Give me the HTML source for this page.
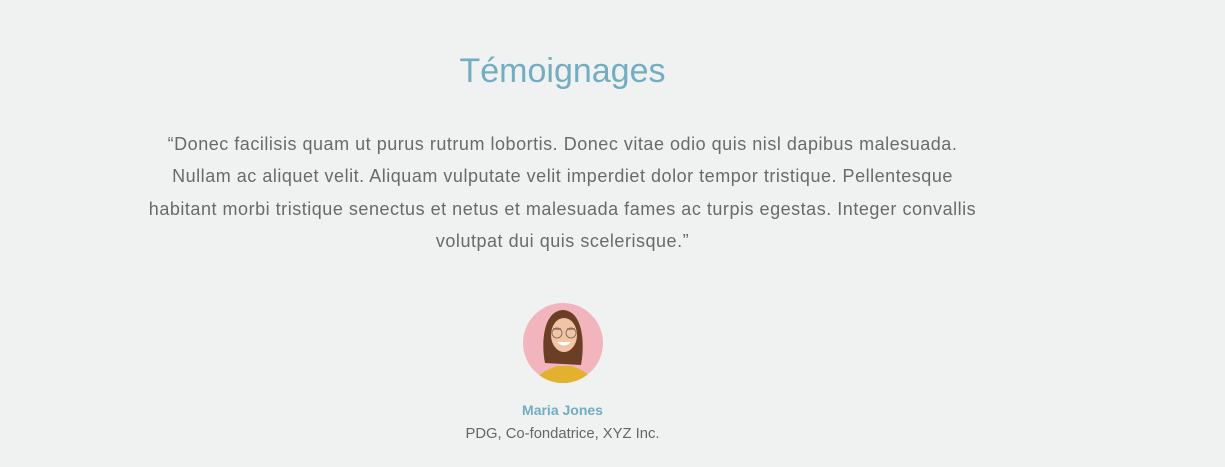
<!DOCTYPE html>
<html><head><meta charset="utf-8"><style>
html,body{margin:0;padding:0;width:1225px;height:467px;background:#f0f1f1;overflow:hidden;font-family:"Liberation Sans",sans-serif}
.c{position:absolute;left:0;width:1125px;text-align:center;white-space:nowrap}
h1{position:absolute;left:0;width:1125px;text-align:center;margin:0;top:50px;font-weight:400;font-size:34px;color:#72adc2;line-height:42px}
.q{top:128px;font-size:18px;letter-spacing:0.52px;line-height:32.3px;color:#6a6a6a}
.n{top:402px;font-size:14px;font-weight:700;color:#72adc2}
.t{top:426px;font-size:14.8px;color:#666}
</style></head><body>
<h1>Témoignages</h1>
<div class="c q">“Donec facilisis quam ut purus rutrum lobortis. Donec vitae odio quis nisl dapibus malesuada.<br>Nullam ac aliquet velit. Aliquam vulputate velit imperdiet dolor tempor tristique. Pellentesque<br>habitant morbi tristique senectus et netus et malesuada fames ac turpis egestas. Integer convallis<br>volutpat dui quis scelerisque.”</div>
<svg style="position:absolute;left:523px;top:303px" width="80" height="80" viewBox="0 0 80 80">
<defs><clipPath id="k"><circle cx="40" cy="40" r="40"/></clipPath></defs>
<g clip-path="url(#k)">
<rect width="80" height="80" fill="#f2b5bd"/>
<path d="M22 60 C18 40 20 8 40 7 C60 8 62 40 58 62 Z" fill="#6b3e26"/>
<ellipse cx="41" cy="32" rx="13" ry="17" fill="#f1c4a6"/>
<path d="M30 26 h8 M44 26 h8" stroke="#8a7060" stroke-width="1.5"/>
<circle cx="34" cy="30" r="5" fill="none" stroke="#8a7060" stroke-width="1"/>
<circle cx="48" cy="30" r="5" fill="none" stroke="#8a7060" stroke-width="1"/>
<path d="M34 39 Q41 46 48 39 Z" fill="#fff"/>
<path d="M12 82 C14 70 26 66 34 63 L48 63 C58 66 68 70 70 82 Z" fill="#e3b12e"/>
</g></svg>
<div class="c n">Maria Jones</div>
<div class="c t">PDG, Co-fondatrice, XYZ Inc.</div>
</body></html>
